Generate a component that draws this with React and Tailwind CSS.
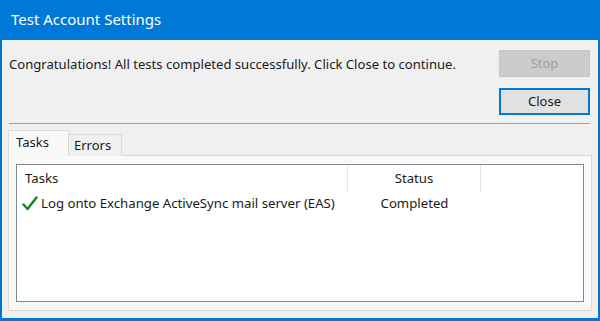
import React from "react";

function Check() {
  return (
    <svg width="16" height="15" viewBox="0 0 16 15" className="shrink-0">
      <path d="M1.5 8.5 L5.5 13 L14.5 1.5" fill="none" stroke="#1f7d25" strokeWidth="2.4" strokeLinecap="round" strokeLinejoin="round" />
    </svg>
  );
}

export default function App() {
  return (
    <div
      className="w-[600px] h-[321px] border-x-2 border-b-[3px] border-[#0078d7] bg-[#f0f0f0] flex flex-col text-[#1a1a1a] overflow-hidden"
      style={{ fontFamily: '"Noto Sans", "Open Sans", sans-serif' }}
    >
      {/* Title bar */}
      <div className="h-[40px] bg-[#0078d7] text-white text-[15px] flex items-center pl-[9px] pb-px shrink-0">
        Test Account Settings
      </div>

      {/* Message + buttons */}
      <div className="flex pl-[7px] pr-[8px] pt-[10px]">
        <div className="flex-1 text-[13.1px] pt-[6px] leading-[16px]">
          Congratulations! All tests completed successfully. Click Close to continue.
        </div>
        <div className="flex flex-col gap-[11px] w-[91px]">
          <button className="h-[27px] bg-[#cccccc] border border-[#c4c4c4] text-[#9c9c9c] text-[13px]">
            Stop
          </button>
          <button className="h-[27px] bg-[#e1e1e1] border-2 border-[#0078d7] text-[#1a1a1a] text-[13px]">
            Close
          </button>
        </div>
      </div>

      {/* Separator */}
      <div className="ml-[7px] mr-[8px] mt-[8px] h-px bg-[#a0a0a0]" />

      {/* Tabs */}
      <div className="flex px-[6px] mt-[6px] h-[26px] items-end relative z-10">
        <div className="h-[26px] w-[61px] bg-[#f9f9f9] border border-b-0 border-[#d9d9d9] text-[13px] pl-[7px] pt-[2px]">
          Tasks
        </div>
        <div className="h-[22px] w-[53px] bg-[#f0f0f0] border border-l-0 border-b-0 border-[#d9d9d9] text-[13px] pl-[5px] pt-px">
          Errors
        </div>
      </div>

      {/* Tab panel */}
      <div className="mx-[6px] -mt-px border border-[#d9d9d9] bg-[#f9f9f9] h-[156px] pt-[8px] px-[7px] pb-[8px]">
        <div className="h-full bg-white border border-[#828790] flex flex-col text-[13.2px]">
          <div className="flex h-[27px] shrink-0">
            <div className="w-[331px] border-r border-[#e5e5e5] pl-[8px] flex items-center">Tasks</div>
            <div className="w-[133px] border-r border-[#e5e5e5] flex items-center justify-center">Status</div>
            <div className="flex-1" />
          </div>
          <div className="flex h-[24px] items-center">
            <div className="w-[331px] pl-[5px] flex items-center gap-[3px]">
              <Check />
              <span>Log onto Exchange ActiveSync mail server (EAS)</span>
            </div>
            <div className="w-[133px] text-center">Completed</div>
          </div>
        </div>
      </div>
    </div>
  );
}
